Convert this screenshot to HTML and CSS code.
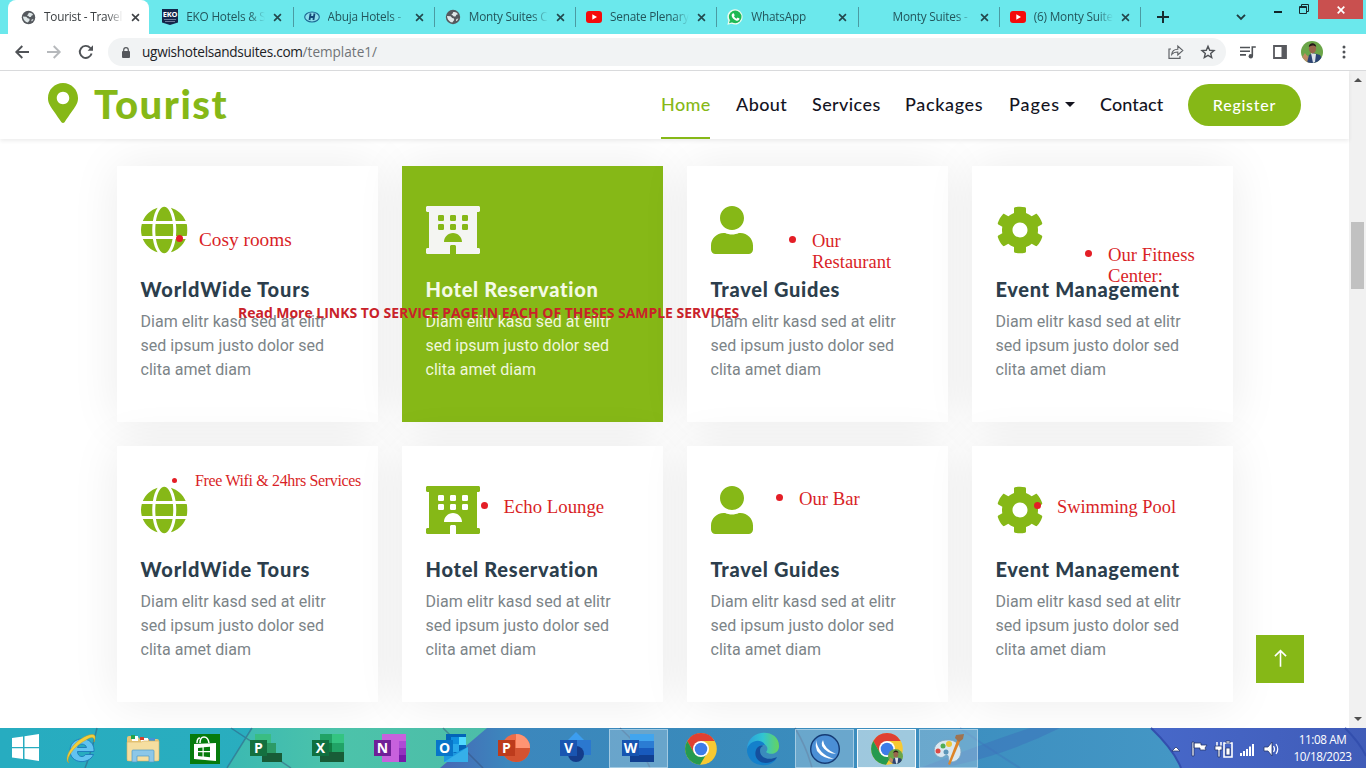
FILE: index.html
```
<!DOCTYPE html>
<html lang="en">
<head>
<meta charset="utf-8">
<title>Tourist - Travel</title>
<link rel="stylesheet" href="styles.css">
</head>
<body>
<svg class="defs" aria-hidden="true">
  <symbol id="x" viewBox="0 0 10 10"><path d="M1.2 1.2l7.6 7.6M8.8 1.2l-7.6 7.6" stroke="currentColor" stroke-width="1.8"/></symbol>
  <symbol id="earth" viewBox="0 0 16 16"><circle cx="8" cy="8" r="7.2" fill="#55595e"/><path d="M8 3.200c2-.6 3.800.2 5 2l-1.600.6-.9 1.600H8.800L7.600 6.200 6.500 6C6.500 4.800 8.400 4.600 8 3.200zM2 7l3.600.3 1.600 1.600 1.800.5.2 1.600-1.900 2.400C4.900 13.200 2.400 11 2 7zM11.400 10l2-.5-1.300 2.300-1.200.3z" fill="#dfe7e8"/></symbol>
  <symbol id="youtube" viewBox="0 0 16 16"><rect y="2" width="16" height="12" rx="3" fill="#f40b0b"/><path d="M6.300 5.300v5.400L11 8z" fill="#fff"/></symbol>
  <symbol id="globe" viewBox="0 0 496 512"><path d="M336.500 160C322 70.700 287.800 8 248 8s-74 62.700-88.500 152h177zM152 256c0 22.200 1.200 43.500 3.300 64h185.300c2.100-20.500 3.300-41.800 3.300-64s-1.200-43.500-3.300-64H155.300c-2.100 20.500-3.300 41.800-3.300 64zm324.700-96c-28.600-67.900-86.500-120.400-158-141.600 24.400 33.800 41.200 84.700 50 141.600h108zM177.200 18.400C105.800 39.600 47.800 92.100 19.300 160h108c8.700-56.900 25.500-107.800 49.900-141.600zM487.400 192H372.700c2.100 21 3.300 42.500 3.300 64s-1.200 43-3.300 64h114.600c5.500-20.500 8.600-41.800 8.600-64s-3.100-43.500-8.500-64zM120 256c0-21.500 1.200-43 3.300-64H8.600C3.200 212.500 0 233.800 0 256s3.200 43.500 8.600 64h114.600c-2-21-3.200-42.500-3.200-64zm39.500 96c14.500 89.300 48.700 152 88.500 152s74-62.700 88.500-152h-177zm159.300 141.600c71.400-21.200 129.400-73.700 158-141.600h-108c-8.800 56.900-25.600 107.800-50 141.600zM19.300 352c28.600 67.900 86.500 120.400 158 141.600-24.400-33.800-41.200-84.700-50-141.600h-108z"/></symbol>
  <symbol id="hotel" viewBox="0 0 576 512"><path fill-rule="evenodd" d="M560 64c8.840 0 16-7.160 16-16V16c0-8.840-7.160-16-16-16H16C7.160 0 0 7.160 0 16v32c0 8.840 7.160 16 16 16h16v384H16c-8.840 0-16 7.160-16 16v32c0 8.840 7.160 16 16 16h240v-80c0-8.800 7.200-16 16-16h32c8.800 0 16 7.200 16 16v80h240c8.840 0 16-7.160 16-16v-32c0-8.840-7.160-16-16-16h-16V64zM141 96h38q13 0 13 13v38q0 13-13 13h-38q-13 0-13-13v-38q0-13 13-13zM269 96h38q13 0 13 13v38q0 13-13 13h-38q-13 0-13-13v-38q0-13 13-13zM397 96h38q13 0 13 13v38q0 13-13 13h-38q-13 0-13-13v-38q0-13 13-13zM141 192h38q13 0 13 13v38q0 13-13 13h-38q-13 0-13-13v-38q0-13 13-13zM269 192h38q13 0 13 13v38q0 13-13 13h-38q-13 0-13-13v-38q0-13 13-13zM397 192h38q13 0 13 13v38q0 13-13 13h-38q-13 0-13-13v-38q0-13 13-13zM192 384c0-53 43-96 96-96s96 43 96 96z"/></symbol>
  <symbol id="user" viewBox="0 0 448 512"><path d="M224 256c70.700 0 128-57.300 128-128S294.700 0 224 0 96 57.300 96 128s57.300 128 128 128zm89.600 32h-16.700c-22.200 10.200-46.900 16-72.900 16s-50.600-5.800-72.900-16h-16.700C60.200 288 0 348.200 0 422.400V464c0 26.500 21.500 48 48 48h352c26.500 0 48-21.500 48-48v-41.600c0-74.200-60.200-134.400-134.400-134.400z"/></symbol>
  <symbol id="cog" viewBox="0 0 512 512"><path d="M487.400 315.700l-42.600-24.600c4.300-23.200 4.300-47 0-70.200l42.600-24.600c4.900-2.800 7.100-8.600 5.500-14-11.100-35.600-30-67.800-54.700-94.600-3.800-4.100-10-5.100-14.800-2.300L380.800 110c-17.900-15.400-38.500-27.300-60.800-35.100V25.800c0-5.600-3.900-10.500-9.400-11.700-36.700-8.200-74.300-7.800-109.200 0-5.500 1.200-9.400 6.100-9.400 11.700V75c-22.200 7.900-42.800 19.800-60.800 35.100L88.700 85.500c-4.900-2.800-11-1.900-14.800 2.300-24.700 26.700-43.600 58.900-54.700 94.600-1.700 5.400.6 11.200 5.500 14L67.300 221c-4.300 23.200-4.300 47 0 70.200l-42.600 24.600c-4.900 2.800-7.100 8.600-5.500 14 11.100 35.600 30 67.800 54.700 94.600 3.800 4.100 10 5.100 14.800 2.300l42.600-24.600c17.900 15.400 38.500 27.300 60.800 35.100v49.200c0 5.600 3.900 10.500 9.400 11.700 36.700 8.200 74.300 7.800 109.200 0 5.500-1.200 9.400-6.100 9.400-11.700v-49.200c22.200-7.900 42.800-19.800 60.800-35.100l42.600 24.600c4.900 2.800 11 1.900 14.800-2.300 24.700-26.700 43.600-58.900 54.700-94.600 1.500-5.500-.7-11.300-5.600-14.100zM256 336c-44.100 0-80-35.900-80-80s35.900-80 80-80 80 35.900 80 80-35.900 80-80 80z"/></symbol>
  <symbol id="portrait" viewBox="0 0 22 22"><clipPath id="round"><circle cx="11" cy="11" r="11"/></clipPath><g clip-path="url(#round)"><rect width="22" height="22" fill="#6ba548"/><path d="M0 22v-6l5-2 4 2 2 6z" fill="#b58d66"/><path d="M6 22l2-8 4-2 7 2 3 5v3z" fill="#2b4474"/><path d="M10 12l2 10 2-1 1-8z" fill="#dde3ea"/><ellipse cx="11.500" cy="7.500" rx="3.600" ry="5" fill="#98664c"/><path d="M7.800 6c0-5 7.400-5 7.400 0-2-2-5-2-7.400 0z" fill="#241a18"/><path d="M2 15l2-3 2 3v4z" fill="#c48a62"/></g></symbol>
  <symbol id="chrome" viewBox="0 0 32 32"><circle cx="16" cy="16" r="15.800" fill="#f7c933"/><path d="M2.300 8A15.800 15.800 0 0 1 29.700 8H16l-7 12z" fill="#df4032"/><path d="M2.300 8A15.800 15.800 0 0 0 15 31.800l7-11.800H9.100z" fill="#259a50"/><circle cx="16" cy="16" r="8" fill="#fff"/><circle cx="16" cy="16" r="6.300" fill="#3d7ce8"/></symbol>
</svg>

<header class="browser">
  <div class="tabs">
    <div class="tab active"><svg class="fav"><use href="#earth"/></svg><span>Tourist - Travel</span><svg class="close"><use href="#x"/></svg></div>
    <div class="tab"><svg class="fav" viewBox="0 0 16 16"><path d="M0 0h16v13.500L8 16l-8-2.500z" fill="#14264a"/><path d="M2 10.500h12M3 12.500h10" stroke="#8392ac" stroke-width=".8"/><text x="8" y="8" text-anchor="middle" font-size="7.500" font-weight="bold" fill="#fff">EKO</text></svg><span>EKO Hotels &amp; S</span><svg class="close"><use href="#x"/></svg></div>
    <div class="tab"><svg class="fav" viewBox="0 0 16 16"><ellipse cx="8" cy="8" rx="7.300" ry="5" fill="#8ddfec" stroke="#1b6793" stroke-width="1.100"/><path d="M6.600 4.500L5.500 11M10.500 4.500L9.400 11M5.500 8h5" stroke="#134a78" stroke-width="1.800"/></svg><span>Abuja Hotels -</span><svg class="close"><use href="#x"/></svg></div>
    <div class="tab"><svg class="fav"><use href="#earth"/></svg><span>Monty Suites C</span><svg class="close"><use href="#x"/></svg></div>
    <div class="tab"><svg class="fav"><use href="#youtube"/></svg><span>Senate Plenary</span><svg class="close"><use href="#x"/></svg></div>
    <div class="tab"><svg class="fav" viewBox="0 0 16 16"><path d="M.4 15.800l1-4A7.600 7.600 0 1 1 4.500 14.700z" fill="#eefcef"/><circle cx="8.200" cy="7.900" r="6.300" fill="#1eb954"/><path d="M2 14.200l1-3.500 2.400 2.500z" fill="#1eb954"/><path d="M5.600 4.400l1.200-.1.900 2-.7 1c.6 1.200 1.400 1.900 2.600 2.400l.9-1.100 2 1c0 2-2 2.500-3.600 1.800C6.600 10.500 5 8.800 4.700 7c-.2-1.200.2-2 .9-2.600z" fill="#fff"/></svg><span>WhatsApp</span><svg class="close"><use href="#x"/></svg></div>
    <div class="tab"><i class="fav"></i><span>Monty Suites -</span><svg class="close"><use href="#x"/></svg></div>
    <div class="tab"><svg class="fav"><use href="#youtube"/></svg><span>(6) Monty Suite</span><svg class="close"><use href="#x"/></svg></div>
    <svg class="plus" viewBox="0 0 12 12"><path d="M6 0v12M0 6h12" stroke="#182c30" stroke-width="2"/></svg>
    <div class="controls">
      <svg class="chev" viewBox="0 0 10 6"><path d="M1 .8l4 4 4-4" fill="none" stroke="#203c40" stroke-width="1.900"/></svg>
      <svg class="min" viewBox="0 0 8 2"><path d="M0 1h8" stroke="#102428" stroke-width="2"/></svg>
      <svg class="rest" viewBox="0 0 10 10"><path d="M.5 2.500h7v7h-7zM.5 3.500h7M2.500 2V.5h7v7H8" fill="none" stroke="#182c30"/></svg>
      <div class="quit"><svg viewBox="0 0 8 8"><path d="M.7.700l6.600 6.600M7.300.7L.7 7.300" stroke="#fff" stroke-width="1.700"/></svg></div>
    </div>
  </div>
  <div class="toolbar">
    <svg class="back" viewBox="0 0 14 14"><path d="M14 7H1.500M7.300 1L1.300 7l6 6" fill="none" stroke="#505357" stroke-width="1.900"/></svg>
    <svg class="fwd" viewBox="0 0 14 14"><path d="M0 7h12.500M6.700 1l6 6-6 6" fill="none" stroke="#b6b9bc" stroke-width="1.900"/></svg>
    <svg class="reload" viewBox="0 0 14 14"><path d="M12.600 8.500A6 6 0 1 1 11.200 2.800L13 4.600" fill="none" stroke="#505357" stroke-width="1.900"/><path d="M14 .3v5.400H8.600z" fill="#505357"/></svg>
    <div class="omnibox">
      <svg class="lock" viewBox="0 0 8 11"><rect y="4" width="8" height="7" rx="1" fill="#55585c"/><path d="M1.700 4.500V3a2.300 2.300 0 0 1 4.600 0v1.500" fill="none" stroke="#55585c" stroke-width="1.200"/></svg>
      <span class="url">ugwishotelsandsuites.com<b>/template1/</b></span>
      <svg class="share" viewBox="0 0 16 14"><path d="M3 4H1v9.400h11V11" fill="none" stroke="#606367" stroke-width="1.200"/><path d="M3.700 9.500C4 6 6.500 4.300 9.800 4.200V1l5 4.500-5 4.500V7C7 7 5.300 7.500 3.700 9.500z" fill="none" stroke="#606367" stroke-width="1.100"/></svg>
      <svg class="star" viewBox="0 0 14 14"><path d="M7 1.300l1.700 4 4.300.3-3.300 2.800 1 4.200L7 10.400l-3.700 2.200 1-4.200L1 5.600l4.300-.3z" fill="none" stroke="#505357" stroke-width="1.400"/></svg>
    </div>
    <svg class="queue" viewBox="0 0 16 13"><path d="M0 1.500h10M0 5.200h10M0 8.900h6M12.300 10V1h3.500" fill="none" stroke="#505357" stroke-width="1.600"/><circle cx="10.800" cy="10.200" r="2.200" fill="#505357"/></svg>
    <svg class="panel" viewBox="0 0 14 14"><path d="M1 1h12v12H1z" fill="none" stroke="#58595e" stroke-width="1.800"/><path d="M8.500 1H13v12H8.500z" fill="#58595e"/></svg>
    <svg class="avatar"><use href="#portrait"/></svg>
    <svg class="dots" viewBox="0 0 4 14"><g fill="#505357"><circle cx="2" cy="2" r="1.500"/><circle cx="2" cy="7" r="1.500"/><circle cx="2" cy="12" r="1.500"/></g></svg>
  </div>
</header>

<div class="viewport">
  <main class="page">
    <nav class="navbar">
      <a class="brand"><svg viewBox="0 0 384 512"><path d="M172.268 501.670C26.970 291.031 0 269.413 0 192 0 85.961 85.961 0 192 0s192 85.961 192 192c0 77.413-26.970 99.031-172.268 309.670-9.535 13.774-29.930 13.773-39.464 0zM192 272c44.183 0 80-35.817 80-80s-35.817-80-80-80-80 35.817-80 80 35.817 80 80 80z"/></svg>Tourist</a>
      <div class="links">
        <a class="current">Home</a><a>About</a><a>Services</a><a class="pk">Packages</a><a class="pg">Pages<i class="caret"></i></a><a class="ct">Contact</a>
        <a class="register">Register</a>
      </div>
    </nav>
    <section class="services">
      <article class="card"><svg class="w-globe"><use href="#globe"/></svg><h5 class="wide">WorldWide Tours</h5><p>Diam elitr kasd sed at elitr sed ipsum justo dolor sed clita amet diam</p></article>
      <article class="card hover"><svg class="w-hotel"><use href="#hotel"/></svg><h5>Hotel Reservation</h5><p>Diam elitr kasd sed at elitr sed ipsum justo dolor sed clita amet diam</p></article>
      <article class="card"><svg class="w-user"><use href="#user"/></svg><h5>Travel Guides</h5><p>Diam elitr kasd sed at elitr sed ipsum justo dolor sed clita amet diam</p></article>
      <article class="card"><svg class="w-cog"><use href="#cog"/></svg><h5 class="snug">Event Management</h5><p>Diam elitr kasd sed at elitr sed ipsum justo dolor sed clita amet diam</p></article>
      <article class="card"><svg class="w-globe"><use href="#globe"/></svg><h5 class="wide">WorldWide Tours</h5><p>Diam elitr kasd sed at elitr sed ipsum justo dolor sed clita amet diam</p></article>
      <article class="card"><svg class="w-hotel"><use href="#hotel"/></svg><h5>Hotel Reservation</h5><p>Diam elitr kasd sed at elitr sed ipsum justo dolor sed clita amet diam</p></article>
      <article class="card"><svg class="w-user"><use href="#user"/></svg><h5>Travel Guides</h5><p>Diam elitr kasd sed at elitr sed ipsum justo dolor sed clita amet diam</p></article>
      <article class="card"><svg class="w-cog"><use href="#cog"/></svg><h5 class="snug">Event Management</h5><p>Diam elitr kasd sed at elitr sed ipsum justo dolor sed clita amet diam</p></article>
    </section>
    <a class="to-top"><svg viewBox="0 0 14 20"><path d="M7 19V1.500M1 7.500l6-6 6 6" fill="none" stroke="#fff" stroke-width="1.700"/></svg></a>
  </main>
  <div class="scrollbar"><i class="up"></i><i class="thumb"></i><i class="down"></i></div>
</div>

<div class="note n-cosy">Cosy rooms</div>
<div class="note n-rest">Our<br>Restaurant</div>
<div class="note n-fit">Our Fitness<br>Center:</div>
<div class="note n-wifi">Free Wifi &amp; 24hrs Services</div>
<div class="note n-echo">Echo Lounge</div>
<div class="note n-bar">Our Bar</div>
<div class="note n-pool">Swimming Pool</div>
<div class="remark">Read More LINKS TO SERVICE PAGE IN EACH OF THESES SAMPLE SERVICES</div>

<footer class="taskbar">
  <svg class="wallpaper" viewBox="0 0 1366 40" preserveAspectRatio="none">
    <defs>
      <linearGradient id="g1"><stop offset="0" stop-color="#27acc0"/><stop offset="1" stop-color="#34b3b8"/></linearGradient>
      <linearGradient id="g2"><stop offset="0" stop-color="#3bb9b2"/><stop offset=".4" stop-color="#4cc3aa"/><stop offset="1" stop-color="#4dbca8"/></linearGradient>
      <linearGradient id="g3"><stop offset="0" stop-color="#4668b6"/><stop offset=".09" stop-color="#3c87bd"/><stop offset=".35" stop-color="#398abb"/><stop offset=".7" stop-color="#3d8fc0"/><stop offset="1" stop-color="#4497c5"/></linearGradient>
      <linearGradient id="g4"><stop offset="0" stop-color="#4768c9"/><stop offset="1" stop-color="#405cb8"/></linearGradient>
    </defs>
    <rect width="1366" height="40" fill="url(#g1)"/>
    <path d="M252 0h250v40H227z" fill="url(#g2)"/>
    <path d="M487 0h700v40H440z" fill="url(#g3)"/>
    <path d="M97 0q-4 20-12 40M252 0l-25 40M231 0l60 40M443 0l40 40M620 0q22 20 30 40M795 0q12 20 17 40" fill="none" stroke="#334c75" stroke-opacity=".45" stroke-width="1.500"/>
    <path d="M920 40Q985 15 1030 0h30Q1000 30 940 40z" fill="#3c69b8" opacity=".4"/>
    <path d="M960 0q20 15 60 40" stroke="#4070ba" stroke-width="2" opacity=".35" fill="none"/>
    <path d="M1151 0h215v40h-185Q1174 22 1151 0z" fill="url(#g4)"/>
    <path d="M1151 0q23 22 30 40M1345 0q15 15 21 28" fill="none" stroke="#334fae" stroke-width="2"/>
  </svg>
  <div class="apps">
    <div class="app start"><svg viewBox="0 0 27 27"><path d="M0 4l11-1.600V13H0zM12.500 2.200L27 0v13H12.500zM0 14.300h11V25L0 23.400zM12.500 14.300H27V27l-14.500-2.200z" fill="#fff"/></svg></div>
    <div class="app"><svg viewBox="0 0 32 32"><path d="M12.500 14.500c1-4.500 8-4.500 9 0zM29 18.500C30 1.500 5 2 5 17.500 5 31 24 32 28.500 21.500H20.500c-2 3.500-8 2.500-8-3z" fill="#62c3f0" stroke="#1b79ba" stroke-width=".9" fill-rule="evenodd"/><path d="M4 30C-3 25 10 6 24 2c7-2 7 2 5 7 1-5-2-6-8-2C9 13 0 26 4 30z" fill="#f2cf3c" stroke="#c99c20" stroke-width=".5"/></svg></div>
    <div class="app"><svg viewBox="0 0 32 32"><path d="M0 5q0-2 2-2h8l3 3h17q2 0 2 2v20H0z" fill="#e9c777"/><path d="M5 3h6v5H5zM14 5h7v5h-7z" fill="#fff"/><path d="M4 2h4v4H4z" fill="#22a34d"/><path d="M13 4h4v3h-4z" fill="#d14130"/><path d="M22 5h6v3h-6z" fill="#4493d5"/><path d="M0 9h14l3-1h15v18q0 2-2 2H2q-2 0-2-2z" fill="#f5dea0" stroke="#d6b060" stroke-width=".6"/><path d="M5 29V18q0-1 1-1h20q1 0 1 1v11h-5v-6H10v6z" fill="#8cc7e8" stroke="#4d9bc6" stroke-width=".7"/></svg></div>
    <div class="app"><svg viewBox="0 0 32 32"><path d="M1 1h30v30H1z" fill="#067b0c"/><path d="M5 11l22-1v18L5 26z" fill="#fff"/><path d="M11 10q0-6 4-6t5 6M8 10q0-5 3-5" fill="none" stroke="#fff" stroke-width="1.500"/><path d="M9 15l4.500-.5V18H9zM14.700 14.300l6.300-.5V18h-6.300zM9 19.300h4.500v4.200L9 23zM14.700 19.300H21v4.900l-6.300-.6z" fill="#067b0c"/></svg></div>
    <div class="app"><svg viewBox="0 0 32 32"><path d="M4 2h9v12H4z" fill="#31a56b"/><path d="M4 1h16v9H4z" fill="#3abd83"/><path d="M13 10h12v10H13z" fill="#2c9b65"/><path d="M11 20h20v9H11z" fill="#185c37"/><path d="M-1 7h17v16H-1z" fill="#14703f"/><text x="7.500" y="19.500">P</text></svg></div>
    <div class="app"><svg viewBox="0 0 32 32"><path d="M7 1h12v9H7z" fill="#21a366"/><path d="M19 1h12v9H19z" fill="#34c481"/><path d="M7 10h12v9H7z" fill="#107c41"/><path d="M19 10h12v9H19z" fill="#21a366"/><path d="M7 19h24v10H7z" fill="#185c37"/><path d="M-1 7h17v16H-1z" fill="#107040"/><text x="7.500" y="19.500">X</text></svg></div>
    <div class="app"><svg viewBox="0 0 32 32"><path d="M7 1h24v28H7z" fill="#c761dd"/><path d="M24 8h7v7h-7z" fill="#ae4bd5"/><path d="M24 15h7v7h-7z" fill="#9332bf"/><path d="M24 22h7v7h-7z" fill="#7719aa"/><path d="M-1 7h17v16H-1z" fill="#6f2097"/><text x="7.500" y="19.500">N</text></svg></div>
    <div class="app"><svg viewBox="0 0 32 32"><path d="M9 1h20v20H9z" fill="#0364b8"/><path d="M14 4h8v7h-8z" fill="#0f8fdf"/><path d="M22 4h7v8h-7z" fill="#50d9ff"/><path d="M14 11h8v8h-8z" fill="#28a8ea"/><path d="M7 15l11 5 13-6v15H7z" fill="#1b98df"/><path d="M7 29l24-15v15z" fill="#35afe9"/><path d="M-1 7h17v16H-1z" fill="#0875c9"/><text x="7.500" y="19.500">O</text></svg></div>
    <div class="app"><svg viewBox="0 0 32 32"><circle cx="17" cy="15" r="14" fill="#ed6c47"/><path d="M17 1a14 14 0 0 1 14 14H17z" fill="#ff9473"/><path d="M3 15h28a14 14 0 0 1-28 0z" fill="#d35230"/><path d="M-1 7h17v16H-1z" fill="#bd3b1c"/><text x="7.500" y="19.500">P</text></svg></div>
    <div class="app"><svg viewBox="0 0 32 32"><path d="M7 7l8-8 8 8-8 8z" fill="#3c9def"/><path d="M15 7h15v15H15z" fill="#2b78cf"/><circle cx="15" cy="21" r="8" fill="#143c8b"/><path d="M-1 7h17v16H-1z" fill="#1955b1"/><text x="7.500" y="19.500">V</text></svg></div>
    <div class="app open"><svg viewBox="0 0 32 32"><path d="M7 1h24v7H7z" fill="#41a5ee"/><path d="M7 8h24v7H7z" fill="#2b7cd3"/><path d="M7 15h24v7H7z" fill="#185abd"/><path d="M7 22h24v7H7z" fill="#103f91"/><path d="M-1 7h17v16H-1z" fill="#1654b0"/><text x="7.500" y="19.500">W</text></svg></div>
    <div class="app"><svg><use href="#chrome"/></svg></div>
    <div class="app"><svg viewBox="0 0 32 32"><defs><linearGradient id="e1" x1="0" x2="1"><stop offset="0" stop-color="#2a9fdd"/><stop offset=".5" stop-color="#31c5d2"/><stop offset="1" stop-color="#66d45d"/></linearGradient></defs><path d="M0 16C1-5 32-5 32 13c0 9-10 9-13 6 3-3 1-8-4-8C6 11 1 15 0 16z" fill="url(#e1)"/><path d="M0 17c1-9 14-13 18-5-7-1-9 6-6 11s11 7 18 2c-4 6-10 8-16 7C5 31 0 24 0 17z" fill="#1480cb"/><path d="M10 15c-5 8 2 18 14 14 3-1 5-3 6-5-8 4-17 1-17-6 0-3 1-4 3-5-2-1-4 0-6 2z" fill="#15509e"/></svg></div>
    <div class="app open"><svg viewBox="0 0 32 32"><circle cx="16" cy="16" r="14.300" fill="#4b8fd5" stroke="#153b74" stroke-width="1.400"/><path d="M7 7q2 14 18 19-11 0-17-8-2-5-1-11zM14 7q1 9 13 14-10-1-14-8-1-3 1-6z" fill="#fff"/></svg></div>
    <div class="app open focus"><svg viewBox="0 0 32 32"><use href="#chrome" width="32" height="32"/><use href="#portrait" x="17" y="16" width="15" height="15"/></svg></div>
    <div class="app open"><svg viewBox="0 0 32 32"><path d="M16 7C1 6-3 20 6 24c5 2 6-3 8-2 3 1 0 6 4 7 8 0 12-8 9-15-2-4-6-7-11-7z" fill="#d9e8f1" stroke="#7aa3bf" stroke-width=".8"/><circle cx="16" cy="11" r="3" fill="#ecc83b"/><circle cx="10" cy="13" r="2.500" fill="#50ad55"/><circle cx="5" cy="18" r="2.500" fill="#dc4a45"/><circle cx="13" cy="19" r="2.500" fill="#5c96b8"/><path d="M25 5l3 1-11 26-2-1z" fill="#dd8428"/><path d="M23 2l8-1-1 5-4 3-4-4z" fill="#9f7350"/></svg></div>
  </div>
  <div class="tray">
    <svg viewBox="0 0 108 20"><g fill="#fff" stroke="#26376d" stroke-width=".8"><path d="M1 12h8L5 8z"/><path d="M21 3h2v14h-2zM23 4h7v2h6l-2 3 1 2h-6V9h-6z"/><path d="M46 3v4M50 3v4" stroke="#fff" stroke-width="1.500"/><path d="M44 7h7v4h-2v7h-2v-7h-3z"/><path d="M53 4h8v14h-8z" fill="none" stroke="#fff" stroke-width="1.600"/><path d="M55 2h4v2h-4zM55 9h4v7h-4z"/><path d="M93 8h4l4-5v14l-4-5h-4z"/></g><path d="M69 14h2v3h-2zM72 12h2v5h-2zM75 10h2v7h-2zM78 7.500h2V17h-2zM81 5h2v12h-2z" fill="#fff"/><path d="M102.500 7q2 3 0 6M105 5q3.500 5 0 10" fill="none" stroke="#fff" stroke-width="1.200"/></svg>
    <div class="clock"><span class="time">11:08 AM</span><span>10/18/2023</span></div>
  </div>
</footer>
</body>
</html>
```
FILE: styles.css
```
* { box-sizing: border-box; }
body { margin: 0; width: 1366px; height: 768px; overflow: hidden; display: flex; flex-direction: column; background: #fff; font-family: "Open Sans", sans-serif; }
svg { display: block; flex: none; overflow: visible; }
.defs { position: absolute; width: 0; height: 0; }

.browser { height: 71px; flex: none; border-bottom: 1px solid #d9dadc; }
.tabs { display: flex; height: 34px; padding-left: 8px; background: #6be8ec; }
.tab { position: relative; display: flex; align-items: center; width: 141.250px; height: 34px; padding-left: 13px; color: #23565c; font-size: 11.800px; letter-spacing: -.22px; }
.tab::after { content: ""; position: absolute; right: -3px; top: 7px; width: 1px; height: 20px; background: #4b9ba2; }
.tab.active { background: #fff; border-radius: 8px 8px 0 0; color: #3c4043; }
.tab.active::after { display: none; }
.fav { width: 16px; height: 16px; flex: none; }
.active .fav { width: 15px; height: 15px; }
.tab span { width: 79px; margin: -2px 0 0 8px; overflow: hidden; white-space: nowrap; -webkit-mask-image: linear-gradient(90deg, #000 80%, transparent); mask-image: linear-gradient(90deg, #000 80%, transparent); }
.close { width: 9px; height: 9px; margin-left: 8px; color: #23484d; }
.plus { width: 12px; height: 12px; margin: 11px 0 0 19px; }
.active .close { color: #3f4246; }
.controls { display: flex; flex: 1; }
.chev { width: 10px; height: 6px; margin: 14px 0 0 67px; }
.min { width: 8px; height: 2px; margin: 11px 0 0 28px; }
.rest { width: 10px; height: 10px; margin: 4px 0 0 17px; }
.quit { display: flex; align-items: center; justify-content: center; width: 45px; height: 19px; margin-left: 9px; background: #c9504f; }
.quit svg { width: 8px; height: 8px; }

.toolbar { display: flex; align-items: center; height: 36px; padding: 0 20px 0 15px; }
.back, .fwd, .reload { width: 14px; height: 14px; }
.fwd { margin-left: 18px; }
.reload { margin-left: 18px; }
.omnibox { display: flex; align-items: center; width: 1118px; height: 28px; margin-left: 15px; padding: 0 11px 0 14px; border-radius: 14px; background: #f1f3f4; }
.lock { width: 8px; height: 11px; }
.url { flex: 1; margin: -2px 0 0 12px; color: #202124; font-size: 13.600px; letter-spacing: -.28px; }
.url b { color: #707377; font-weight: 400; letter-spacing: -.02px; }
.share { width: 16px; height: 14px; margin-right: 17px; }
.star { width: 14px; height: 14px; }
.queue { width: 16px; height: 13px; margin-left: 14px; }
.panel { width: 14px; height: 14px; margin-left: 17px; }
.avatar { width: 22px; height: 22px; margin-left: 14px; }
.dots { width: 4px; height: 14px; margin-left: 19px; }

.viewport { display: flex; height: 657px; flex: none; overflow: hidden; }
.page { position: relative; width: 1349px; }
.scrollbar { display: flex; flex-direction: column; align-items: center; justify-content: space-between; width: 17px; padding: 7px 0 7px; background: #f1f1f1; position: relative; }
.up, .down { border: 4px solid transparent; border-top: 0; border-bottom: 4px solid #505050; }
.down { border-bottom: 0; border-top: 4px solid #505050; }
.thumb { position: absolute; top: 151px; left: 2px; width: 13px; height: 67px; background: #c1c1c1; }

.navbar { position: relative; z-index: 1; display: flex; justify-content: space-between; height: 68px; padding: 0 48px; background: #fff; box-shadow: 0 2px 4px rgba(0,0,0,.075); font-family: Lato, sans-serif; }
.brand { display: flex; align-items: center; height: 66px; color: #86b817; font-size: 40px; font-weight: 900; letter-spacing: 1.550px; }
.brand svg { width: 30px; height: 40px; margin: -2px 16px 0 0; fill: #86b817; }
.links { display: grid; grid-template-columns: 75px 76px 93px 104px 91px 88px 113px; align-items: center; color: #14141f; font-size: 18px; font-weight: 500; letter-spacing: .4px; white-space: nowrap; }
.links a { height: 68px; line-height: 66px; }
.links .current { width: 49px; color: #86b817; border-bottom: 2px solid #86b817; }
.links .pk { letter-spacing: .65px; }
.links .pg { letter-spacing: .95px; }
.links .ct { letter-spacing: .1px; }
.caret { display: inline-block; margin-left: 5px; vertical-align: 4px; border: 5px solid transparent; border-top-color: #14141f; border-bottom: 0; }
.links .register { height: 42px; border-radius: 21px; background: #86b817; color: #fff; font-size: 16px; line-height: 41px; text-align: center; letter-spacing: .75px; }

.services { display: grid; grid-template-columns: repeat(4, 261px); gap: 24px; padding: 27px 116px 0 117px; }
.card { height: 256px; padding: 40px 23.500px; background: #fff; box-shadow: 0 0 45px rgba(0,0,0,.08); color: #7c8488; }
.card svg { height: 48px; fill: #86b817; }
.w-globe { width: 46.500px; }
.w-hotel { width: 54px; }
.w-user { width: 42px; }
.w-cog { width: 48px; }
.card h5 { margin: 23px 0 9px; color: #2c3e4c; font: 900 20px/24px Lato, sans-serif; letter-spacing: .72px; white-space: nowrap; }
.card .wide { letter-spacing: .87px; }
.card .snug { letter-spacing: .65px; }
.card p { margin: 0; width: 190px; font: 16px/24px Roboto, sans-serif; letter-spacing: .02px; }
.card.hover { background: #86b817; color: #f0f7dc; }
.card.hover svg { fill: #f4f5f2; }
.card.hover h5 { color: #f4fae6; }
.to-top { position: absolute; left: 1256px; top: 564px; display: flex; align-items: center; justify-content: center; width: 48px; height: 48px; background: #86b817; }
.to-top svg { width: 13px; height: 19px; margin-top: -2px; }

.note { position: absolute; color: #d91f27; font: 18.700px/21px "Liberation Serif", serif; white-space: nowrap; }
.note::before { content: ""; position: absolute; left: -23px; top: 6px; width: 7px; height: 7px; border-radius: 50%; background: #e41e26; }
.n-cosy { left: 199px; top: 229px; font-size: 19.300px; }
.n-rest { left: 812px; top: 231px; font-size: 18.500px; }
.n-rest::before { top: 5px; }
.n-fit { left: 1108px; top: 244px; }
.n-wifi { left: 195px; top: 470px; font-size: 16px; letter-spacing: -.35px; }
.n-wifi::before { top: 8px; width: 5px; height: 5px; }
.n-echo { left: 503.500px; top: 496px; font-size: 18.800px; }
.n-bar { left: 799px; top: 488px; }
.n-pool { left: 1057px; top: 497px; font-size: 18.400px; }
.n-pool::before { top: 5px; }
.remark { position: absolute; left: 238px; top: 303px; color: #c9222a; font: 700 14px/20px "Open Sans", sans-serif; letter-spacing: -.03px; white-space: nowrap; }

.taskbar { position: relative; display: flex; justify-content: space-between; height: 40px; flex: none; color: #fff; }
.wallpaper { position: absolute; inset: 0; width: 1366px; height: 40px; }
.apps { position: relative; display: flex; padding-left: 50px; }
.app { display: flex; align-items: center; justify-content: center; width: 59px; height: 39px; margin: 1px 2px 0 1px; }
.app svg { width: 32px; height: 32px; }
.app text { fill: #fff; font: 700 14px "Open Sans", sans-serif; text-anchor: middle; }
.app.start { width: 50px; margin: 0 0 0 -50px; }
.app.start svg { width: 27px; height: 27px; }
.app.open { border: 1px solid rgba(220,240,250,.5); background: rgba(205,225,235,.32); }
.app.focus { border: 1px solid #f4fafc; background: rgba(225,240,243,.6); }
.tray { position: relative; display: flex; align-items: center; padding-right: 12px; }
.tray > svg { width: 108px; height: 20px; margin-top: 1px; }
.clock { width: 63px; margin-left: 12px; font-size: 11.700px; line-height: 17px; text-align: center; letter-spacing: -.4px; }
.clock span { display: block; }
```
